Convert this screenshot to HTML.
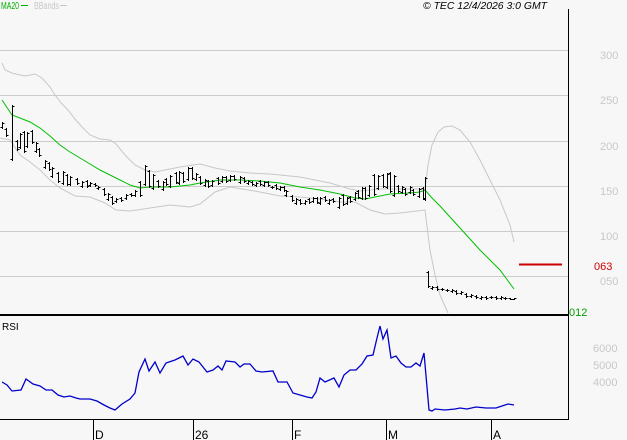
<!DOCTYPE html>
<html><head><meta charset="utf-8"><style>
html,body{margin:0;padding:0;background:#f7f7f7;width:627px;height:440px;overflow:hidden}
svg{display:block;font-family:"Liberation Sans",sans-serif}
</style></head><body>
<svg id="s" width="627" height="440" xmlns="http://www.w3.org/2000/svg">
<rect width="627" height="440" fill="#f7f7f7"/>
<g stroke="#cccccc" stroke-width="1">
<line x1="0" y1="50.5" x2="568" y2="50.5"/>
<line x1="0" y1="95.5" x2="568" y2="95.5"/>
<line x1="0" y1="141.5" x2="568" y2="141.5"/>
<line x1="0" y1="186.5" x2="568" y2="186.5"/>
<line x1="0" y1="231.5" x2="568" y2="231.5"/>
<line x1="0" y1="276.5" x2="568" y2="276.5"/>
</g>
<g fill="#c8c8c8" font-size="11">
<text x="600" y="59">300</text><text x="600" y="104">250</text><text x="600" y="150">200</text>
<text x="600" y="195">150</text><text x="600" y="240">100</text><text x="600" y="285">050</text>
<text x="593" y="352">6000</text><text x="593" y="369">5000</text><text x="593" y="386">4000</text>
</g>
<text x="594" y="270" font-size="11" fill="#cc0000">063</text>
<text x="569" y="316" font-size="11" fill="#00a000">012</text>
<line x1="519" y1="264.5" x2="562" y2="264.5" stroke="#cc0000" stroke-width="2"/>
<text x="1" y="9" font-size="10" fill="#00b000" textLength="18" lengthAdjust="spacingAndGlyphs">MA20</text><line x1="21" y1="5.5" x2="28" y2="5.5" stroke="#00b000"/>
<text x="34" y="9" font-size="10" fill="#c8c8c8" textLength="25" lengthAdjust="spacingAndGlyphs">BBands</text><line x1="60" y1="5.5" x2="67" y2="5.5" stroke="#c8c8c8"/>
<text x="423" y="9" font-size="10.5" font-style="italic" fill="#000" textLength="124" lengthAdjust="spacingAndGlyphs">© TEC 12/4/2026 3:0 GMT</text>
<polyline fill="none" stroke="#c8c8c8" points="2,63 5,70 12,73 20,75 25,76 35,74 42,78 50,87 55,95 62,104 68,110 75,119 82,127 90,135 100,139 110,140 116,144 125,155 135,165 145,170 155,172 165,170 180,167 200,164 215,168 230,171 250,173 270,174 300,177 330,183 350,189 360,191 380,189 410,189 425,189 428,165 432,145 438,132 444,127 452,126 460,130 470,142 480,160 490,180 500,200 510,225 514,242"/>
<polyline fill="none" stroke="#c8c8c8" points="0,138 10,140 20,155 30,162 40,170 50,180 60,188 75,196 90,197 105,203 116,210 130,211 150,208 170,205 190,207 200,204 215,192 230,187 260,192 280,196 300,197 320,199 340,202 355,202 370,210 385,214 400,213 425,210 430,250 435,275 440,295 448,313"/>
<polyline fill="none" stroke="#00c000" points="2,100 12,115 20,118 30,122 40,128 50,136 60,145 70,152 80,158 90,164 100,170 110,175 120,180 130,185 140,188 150,187 160,187 170,187 180,186 190,185 200,183 220,180 240,180 260,181 280,183 300,187 320,190 340,194 355,198 365,199 380,196 390,194 410,193 420,192 425,190 432,198 440,206 460,228 480,250 500,270 514,289"/>
<g id="bars" stroke="#000" stroke-width="1"></g>
<line x1="0" y1="315" x2="569" y2="315" stroke="#000" stroke-width="2"/>
<line x1="568.5" y1="9" x2="568.5" y2="419" stroke="#000"/>
<line x1="0" y1="419.5" x2="569" y2="419.5" stroke="#000"/>
<text x="2" y="330" font-size="10" fill="#000">RSI</text>
<polyline fill="none" stroke="#0000cc" stroke-width="1.3" points="2,382 7,385 12,391 21,390 26,379 33,384 40,386 46,390 52,390 58,395 64,397 70,396 76,398 80,399 90,399 97,401 104,405 110,408 115,410 122,404 130,399 135,393 139,372 145,359 149,371 155,362 160,373 166,363 175,360 183,356 188,365 193,359 199,362 207,372 213,370 218,366 222,370 226,361 235,362 240,367 244,364 250,364 256,371 262,372 273,371 278,382 287,382 293,393 300,395 307,397 312,398 316,392 320,378 325,382 334,378 339,387 344,375 350,370 356,370 362,364 367,356 373,355 377,338 380,326 383,339 387,330 391,358 396,356 401,363 406,367 411,367 416,363 420,366 424,353 429,410 432,411 435,409 445,410 455,409 460,408 467,409 476,407 486,408 496,408 502,406 508,404 514,405"/>
<g stroke="#000">
<line x1="93.5" y1="420" x2="93.5" y2="440"/><line x1="193.5" y1="420" x2="193.5" y2="440"/>
<line x1="292.5" y1="420" x2="292.5" y2="440"/><line x1="386.5" y1="420" x2="386.5" y2="440"/>
<line x1="491.5" y1="420" x2="491.5" y2="440"/>
</g>
<g font-size="12" fill="#000">
<text x="95" y="439">D</text><text x="195" y="439">26</text><text x="294" y="439">F</text><text x="388" y="439">M</text><text x="493" y="439">A</text>
</g>
</svg>
<script>
var d=[[2,122,128],[6,128,136],[12,105,160],[17,140,150],[20,133,148],[24,131,152],[27,132,147],[32,130,143],[36,142,152],[39,148,156],[45,160,168],[49,162,170],[52,167,177],[58,172,182],[63,171,184],[67,174,185],[70,176,185],[77,178,184],[82,181,187],[87,180,187],[90,182,186],[95,183,186],[98,186,189],[104,188,195],[108,193,200],[112,196,204],[116,198,202],[121,197,201],[126,194,199],[131,193,196],[135,190,196],[140,181,196],[145,165,185],[149,170,187],[153,174,189],[158,180,187],[163,181,190],[166,178,185],[170,175,187],[176,172,183],[179,171,184],[183,172,182],[188,167,180],[192,167,179],[196,173,180],[200,176,184],[205,179,186],[208,180,187],[212,180,186],[218,177,184],[222,176,182],[226,176,182],[230,175,181],[234,175,180],[240,176,183],[244,177,182],[248,180,184],[252,181,185],[256,182,186],[260,180,185],[264,181,186],[268,181,186],[272,186,188],[276,184,189],[280,186,190],[284,186,191],[286,190,196],[292,195,201],[296,198,204],[300,199,204],[305,200,204],[309,198,203],[313,197,202],[317,197,203],[320,197,204],[325,196,201],[329,199,204],[333,198,202],[339,197,208],[343,194,205],[347,197,204],[350,196,202],[355,192,200],[358,190,198],[362,187,199],[365,187,199],[369,185,196],[374,174,195],[378,175,189],[383,174,187],[387,173,188],[390,172,192],[394,175,196],[398,185,192],[402,186,193],[405,188,195],[410,186,193],[413,189,195],[419,188,197],[423,187,199],[425,177,200],[428,271,287],[432,286,289],[437,286,290],[442,288,290],[447,289,291],[452,289,292],[456,290,294],[461,291,294],[466,293,297],[471,294,297],[476,295,298],[481,296,299],[486,296,299],[491,296,298],[496,296,299],[501,296,299],[505,297,299],[510,298,299],[514,298,299]];
var g=document.getElementById('bars'),ns='http://www.w3.org/2000/svg',s='';
d.forEach(function(b,i){var x=b[0]+.5,h=b[1],l=b[2];var o=i%2?h+1:l-1,c=i%2?l-1:h+1;
s+='M'+x+' '+h+'V'+(l+1)+'M'+(x-2)+' '+(o+.5)+'H'+x+'M'+x+' '+(c+.5)+'H'+(x+2);});
var p=document.createElementNS(ns,'path');p.setAttribute('d',s);p.setAttribute('fill','none');g.appendChild(p);
</script>
</body></html>
